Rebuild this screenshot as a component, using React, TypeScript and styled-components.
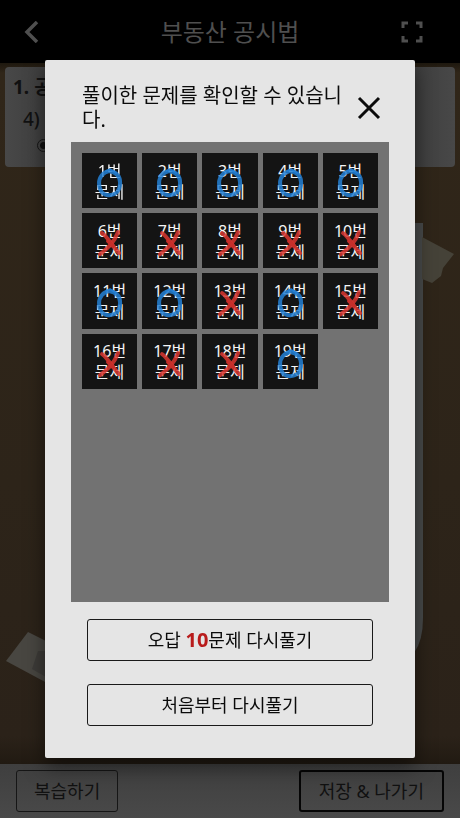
import React from "react";
import styled, { createGlobalStyle } from "styled-components";

const GlobalStyle = createGlobalStyle`
  * { box-sizing: border-box; }
  body {
    margin: 0;
    background: #2b2319;
    font-family: "Noto Sans", "Noto Sans CJK KR", sans-serif;
  }
  button { font-family: inherit; cursor: pointer; }
`;

const Page = styled.div`
  min-height: 100vh;
  display: flex;
  flex-direction: column;
`;

const TopBar = styled.header`
  display: grid;
  grid-template-columns: 32px 1fr 32px;
  align-items: center;
  height: 63px;
  padding: 0 32px 0 16px;
  background: #000;
  color: #4f4f4f;
`;

const Title = styled.h1`
  margin: 0;
  padding-left: 16px;
  font-size: 24px;
  line-height: 32px;
  font-weight: 400;
  text-align: center;
`;

const IconButton = styled.button`
  display: grid;
  place-items: center;
  padding: 0;
  border: 0;
  background: none;
  color: inherit;
`;

const Board = styled.main`
  position: relative;
  flex: 1;
  padding: 4px 5px;
  background: linear-gradient(#1e180f, #302619 10px, #2d2419 60%, #2b2219 96%, #211a12);
`;

const QuestionCard = styled.section`
  position: relative;
  height: 100px;
  padding: 8px;
  border-radius: 4px;
  background: linear-gradient(90deg, #484848, #3b3b3b 12%, #3b3b3b 88%, #484848);
  color: #111;
`;

const Chapter = styled.h2`
  margin: 0;
  font-size: 19px;
  line-height: 24px;
  font-weight: 700;
`;

const Question = styled.p`
  margin: 8px 0 8px 10px;
  font-size: 19px;
  line-height: 24px;
  font-weight: 500;
`;

const Choice = styled.input`
  appearance: none;
  display: block;
  width: 13px;
  height: 13px;
  margin: 0 0 0 24px;
  border: 1px solid #151515;
  border-radius: 50%;
  background: radial-gradient(circle, #111 3px, transparent 4px);
`;

const Paper = styled.svg`
  position: absolute;
  right: 0;
  bottom: 0;
  width: 460px;
  height: 701px;
`;

const BottomBar = styled.footer`
  display: flex;
  justify-content: space-between;
  align-items: center;
  height: 54px;
  padding: 0 16px;
  background: linear-gradient(#3f3f3f, #494949);
`;

const FooterButton = styled.button<{ $strong?: boolean }>`
  height: 42px;
  padding: 0 ${(p) => (p.$strong ? "18px" : "17px")};
  border: ${(p) => (p.$strong ? "2px solid #050505" : "1px solid #161616")};
  border-radius: 3px;
  background: transparent;
  color: #111;
  font-size: 18px;
  line-height: 24px;
`;

const Overlay = styled.div`
  position: fixed;
  inset: 0;
  display: grid;
  grid-template-columns: minmax(0, 1fr);
  align-items: center;
  padding: 0 45px;
`;

const Dialog = styled.section`
  display: flex;
  flex-direction: column;
  padding: 24px 26px 32px;
  border-radius: 2px;
  background: #e5e5e5;
  color: #0b0b0b;
  box-shadow: 0 8px 20px rgba(0, 0, 0, 0.5);
`;

const DialogHead = styled.div`
  display: flex;
  align-items: center;
  justify-content: space-between;
  gap: 8px;
  padding: 0 7px 0 11px;
  margin-bottom: 10px;
`;

const DialogTitle = styled.h2`
  flex: 1;
  margin: 0;
  font-size: 20px;
  line-height: 24px;
  font-weight: 400;
`;

const Panel = styled.div`
  min-height: 460px;
  padding: 11px;
  background: #727272;
`;

const Grid = styled.div`
  display: grid;
  grid-template-columns: repeat(5, minmax(0, 1fr));
  gap: 5px;
`;

const Cell = styled.button`
  position: relative;
  display: flex;
  flex-direction: column;
  align-items: center;
  justify-content: center;
  aspect-ratio: 1;
  padding: 2px 0 0;
  border: 0;
  background: #141414;
  color: #f4f4f4;
  font-size: 16px;
  line-height: 21px;
  white-space: nowrap;
`;

const Mark = styled.svg`
  position: absolute;
  inset: 0;
  width: 100%;
  height: 100%;
`;

const Actions = styled.div`
  display: flex;
  flex-direction: column;
  gap: 23px;
  padding: 17px 16px 0;
`;

const ActionButton = styled.button`
  display: flex;
  align-items: center;
  justify-content: center;
  height: 42px;
  border: 1px solid #1a1a1a;
  border-radius: 3px;
  background: transparent;
  color: #0b0b0b;
  font-size: 18px;
  line-height: 24px;
  white-space: pre;
`;

const Count = styled.strong`
  color: #b91c1c;
  font-size: 20px;
  font-weight: 700;
`;

const answers = "OOOOOXXXXXOOXOXXXXO".split("");

function Correct() {
  return (
    <Mark viewBox="0 0 55 55" fill="none" aria-label="정답">
      <path d="M27 18C21 19 17 24 17 30C17 38 21 42 27 42C34 42 38 37 38 30C38 23 34 19 27 18" stroke="#2480d4" strokeWidth="4" strokeLinecap="round" opacity=".86" />
      <path d="M24 18L28 16L34 20" stroke="#2480d4" strokeWidth="2" strokeLinecap="round" opacity=".8" />
    </Mark>
  );
}

function Wrong() {
  return (
    <Mark viewBox="0 0 55 55" fill="none" aria-label="오답" strokeLinecap="round">
      <path d="M20 20C26 24 30 33 37 40" stroke="#d9362f" strokeWidth="4" opacity=".85" />
      <path d="M36 19C32 29 27 34 18 41" stroke="#d9362f" strokeWidth="4" opacity=".85" />
      <path d="M26 28L31 33" stroke="#c62f2a" strokeWidth="4" />
    </Mark>
  );
}

export default function App() {
  return (
    <>
      <GlobalStyle />
      <Page>
        <TopBar>
          <IconButton aria-label="뒤로">
            <svg width="16" height="22" viewBox="0 0 16 22" fill="none" stroke="currentColor" strokeWidth="3.5">
              <path d="M13 1L3 11L13 21" />
            </svg>
          </IconButton>
          <Title>부동산 공시법</Title>
          <IconButton aria-label="전체 화면">
            <svg width="22" height="22" viewBox="0 0 22 22" fill="none" stroke="currentColor" strokeWidth="3">
              <path d="M2 7V2H7M15 2H20V7M20 15V20H15M7 20H2V15" />
            </svg>
          </IconButton>
        </TopBar>
        <Board>
          <Paper viewBox="0 0 460 701" aria-hidden="true">
            <path d="M400 160H423V555Q423 578 414 590H400Z" fill="#484a4a" />
            <path d="M422 174L454 191L443 205L441 213L432 220L422 216Z" fill="#454238" />
            <path d="M28 569L6 598L60 627V585Z" fill="#484641" />
            <path d="M38 588L32 606L60 622V588Z" fill="#3d3b38" />
          </Paper>
          <QuestionCard>
            <Chapter>1. 공</Chapter>
            <Question>4)</Question>
            <Choice type="radio" name="choice" aria-label="보기" defaultChecked />
          </QuestionCard>
        </Board>
        <BottomBar>
          <FooterButton>복습하기</FooterButton>
          <FooterButton $strong>저장 &amp; 나가기</FooterButton>
        </BottomBar>
      </Page>
      <Overlay>
        <Dialog role="dialog" aria-modal="true" aria-labelledby="dialog-title">
          <DialogHead>
            <DialogTitle id="dialog-title">풀이한 문제를 확인할 수 있습니다.</DialogTitle>
            <IconButton aria-label="닫기">
              <svg width="26" height="24" viewBox="0 0 26 24" fill="none" stroke="#0b0b0b" strokeWidth="3">
                <path d="M3 2L23 22M23 2L3 22" />
              </svg>
            </IconButton>
          </DialogHead>
          <Panel>
            <Grid>
              {answers.map((answer, i) => (
                <Cell key={i}>
                  <span>{i + 1}번</span>
                  <span>문제</span>
                  {answer === "O" ? <Correct /> : <Wrong />}
                </Cell>
              ))}
            </Grid>
          </Panel>
          <Actions>
            <ActionButton>오답 <Count>10</Count>문제 다시풀기</ActionButton>
            <ActionButton>처음부터 다시풀기</ActionButton>
          </Actions>
        </Dialog>
      </Overlay>
    </>
  );
}
